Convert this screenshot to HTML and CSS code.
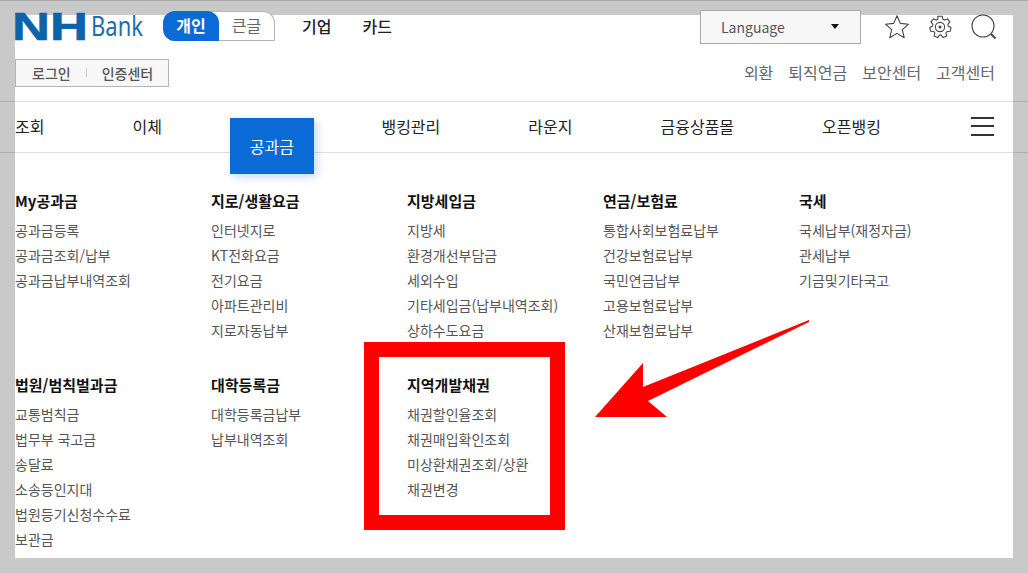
FILE: index.html
```html
<!DOCTYPE html>
<html lang="ko">
<head>
<meta charset="utf-8">
<title>NH Bank</title>
<link rel="stylesheet" href="styles.css">
</head>
<body>
<div class="sheet">
  <header class="top">
    <div class="top-left">
      <div class="brand-row">
        <svg class="logo" width="130" height="30" viewBox="0 0 130 30" role="img" aria-label="NH Bank">
          <text class="logo-nh" x="-3" y="28" textLength="76" lengthAdjust="spacingAndGlyphs">NH</text>
          <text class="logo-bank" x="76" y="24" textLength="52" lengthAdjust="spacingAndGlyphs">Bank</text>
        </svg>
        <div class="tabs">
          <a class="tab tab-on">개인</a>
          <a class="tab">큰글</a>
        </div>
        <nav class="biz">
          <a>기업</a>
          <a>카드</a>
        </nav>
      </div>
      <div class="login">
        <a>로그인</a>
        <i class="sep"></i>
        <a>인증센터</a>
      </div>
    </div>
    <div class="top-right">
      <div class="tools">
        <div class="lang"><span>Language</span><i class="caret"></i></div>
        <svg class="ico ico-star" width="26" height="26" viewBox="0 0 26 26"><path d="M13 1.8l3.3 7.6 8.2.8-6.2 5.4 1.9 8.1-7.2-4.3-7.2 4.3 1.9-8.1-6.2-5.4 8.2-.8z"/></svg>
        <svg class="ico" width="26" height="26" viewBox="0 0 26 26"><path d="M10.8 2.2h4.4l.7 3.1 1.6.8 2.9-1.2 2.4 3-1.9 2.5.4 1.7 2.7 1.5-.8 3.7-3.1.2-1.1 1.4.7 3.1-3.5 1.6-1.9-2.5h-1.8l-1.9 2.5-3.5-1.6.7-3.1-1.1-1.4-3.1-.2-.8-3.7 2.7-1.5.4-1.7-1.9-2.5 2.4-3 2.9 1.2 1.6-.8z"/><circle cx="13" cy="13" r="4.6"/><circle class="ico-fill" cx="13" cy="13" r="1.5"/></svg>
        <svg class="ico ico-search" width="26" height="26" viewBox="0 0 26 26"><circle cx="12" cy="12" r="11"/><path class="ico-handle" d="M20 20l4.5 4.5"/></svg>
      </div>
      <nav class="links">
        <a>외환</a>
        <a>퇴직연금</a>
        <a>보안센터</a>
        <a>고객센터</a>
      </nav>
    </div>
  </header>

  <nav class="gnb">
    <a>조회</a>
    <a>이체</a>
    <a class="gnb-on">공과금</a>
    <a>뱅킹관리</a>
    <a>라운지</a>
    <a>금융상품몰</a>
    <a>오픈뱅킹</a>
    <button class="burger" aria-label="menu"><i></i><i></i><i></i></button>
  </nav>

  <section class="menu">
    <div class="group">
      <h3>My공과금</h3>
      <ul><li>공과금등록</li><li>공과금조회/납부</li><li>공과금납부내역조회</li></ul>
    </div>
    <div class="group">
      <h3>지로/생활요금</h3>
      <ul><li>인터넷지로</li><li>KT전화요금</li><li>전기요금</li><li>아파트관리비</li><li>지로자동납부</li></ul>
    </div>
    <div class="group">
      <h3>지방세입금</h3>
      <ul><li>지방세</li><li>환경개선부담금</li><li>세외수입</li><li>기타세입금(납부내역조회)</li><li>상하수도요금</li></ul>
    </div>
    <div class="group">
      <h3>연금/보험료</h3>
      <ul><li>통합사회보험료납부</li><li>건강보험료납부</li><li>국민연금납부</li><li>고용보험료납부</li><li>산재보험료납부</li></ul>
    </div>
    <div class="group">
      <h3>국세</h3>
      <ul><li>국세납부(재정자금)</li><li>관세납부</li><li>기금및기타국고</li></ul>
    </div>
    <div class="group">
      <h3>법원/범칙벌과금</h3>
      <ul><li>교통범칙금</li><li>법무부 국고금</li><li>송달료</li><li>소송등인지대</li><li>법원등기신청수수료</li><li>보관금</li></ul>
    </div>
    <div class="group">
      <h3>대학등록금</h3>
      <ul><li>대학등록금납부</li><li>납부내역조회</li></ul>
    </div>
    <div class="group">
      <h3>지역개발채권</h3>
      <ul><li>채권할인율조회</li><li>채권매입확인조회</li><li>미상환채권조회/상환</li><li>채권변경</li></ul>
    </div>
  </section>
</div>

<div class="mark-box"></div>
<svg class="mark-arrow" width="230" height="110" viewBox="590 315 230 110"><polygon points="595,417 643,363 643,387 809,320 809,322 648,401 667,417"/></svg>
</body>
</html>
```
FILE: styles.css
```css
* { box-sizing: border-box; }
html, body { margin: 0; padding: 0; }
body {
  position: relative;
  width: 1028px;
  height: 573px;
  overflow: hidden;
  background: #c9c9c9;
  border-top: 1px solid #a8a8a8;
  font-family: "Noto Sans CJK KR", "Noto Sans", sans-serif;
  color: #222;
}
a { color: inherit; text-decoration: none; }
i { display: block; }

.sheet {
  width: 998px;
  height: 543px;
  margin: 14px 0 0 15px;
  background: #fff;
}

.top {
  height: 86px;
  display: flex;
  justify-content: space-between;
  align-items: flex-start;
}
.top-left { margin-top: -4px; }
.brand-row { display: flex; align-items: flex-start; }
.logo { display: block; margin-top: 1px; overflow: visible; }
.logo-nh { font-family: "Liberation Sans", sans-serif; font-weight: 700; font-size: 39px; fill: #0b63a9; stroke: #0b63a9; stroke-width: .6; }
.logo-bank { font-family: "Noto Sans", sans-serif; font-size: 27px; fill: #1c6da9; }

.tabs {
  display: flex;
  width: 112px;
  height: 30px;
  margin-left: 18px;
  border: 1px solid #b4b4b4;
  border-left: 0;
  border-radius: 12px 12px 0 12px;
  background: #fff;
}
.tab {
  flex: 1;
  margin: -1px 0;
  height: 30px;
  line-height: 28px;
  text-align: center;
  font-size: 16px;
  color: #666;
}
.tab-on {
  flex: 0 0 56px;
  background: #0a6ad6;
  color: #fff;
  font-weight: 700;
  border-radius: 12px 12px 0 12px;
}

.biz { display: flex; gap: 31px; margin-left: 27px; font-size: 16px; line-height: 30px; color: #222; font-weight: 500; }

.login {
  display: flex;
  align-items: center;
  width: 154px;
  height: 28px;
  margin-top: 17px;
  padding: 0 0 1px 16px;
  background: #f7f7f7;
  border: 1px solid #b4b4b4;
  font-size: 14px;
  line-height: 26px;
  color: #555;
  font-weight: 500;
}
.sep { width: 1px; height: 9px; margin: 0 15px; background: #ccc; }

.top-right { display: flex; flex-direction: column; align-items: flex-end; margin-top: -5px; padding-right: 18px; }
.tools { display: flex; align-items: center; margin-right: -2px; }
.lang {
  display: flex;
  align-items: center;
  width: 161px;
  height: 34px;
  margin-right: 23px;
  padding: 0 0 1px 20px;
  background: #f7f7f7;
  border: 1px solid #aaa;
  font-size: 14px;
  color: #555;
}
.lang span { flex: 0 0 110px; }
.caret { width: 0; height: 0; border: 4px solid transparent; border-top: 5px solid #111; border-bottom: 0; }
.ico { display: block; margin-right: 18px; overflow: visible; }
.ico-star { margin-right: 17px; }
.ico:last-child { margin-right: 0; }
.ico path, .ico circle { fill: none; stroke: #444; stroke-width: 1.1; stroke-linejoin: round; }
.ico .ico-fill { fill: #444; stroke: none; }
.ico .ico-handle { stroke-width: 2; }

.links { display: flex; gap: 15px; margin-top: 16px; font-size: 16px; line-height: 24px; color: #666; }

.gnb {
  display: flex;
  align-items: center;
  gap: 88px;
  height: 52px;
  width: 1028px;
  margin: 0 0 0 -15px;
  padding: 0 0 2px 15px;
  border-top: 1px solid rgba(0, 0, 0, .13);
  border-bottom: 1px solid rgba(0, 0, 0, .13);
  font-size: 16px;
  color: #222;
}
.gnb-on {
  align-self: flex-start;
  width: 84px;
  height: 56px;
  margin: 16px -20.5px 0 -20px;
  line-height: 56px;
  text-align: center;
  background: #0a6ad6;
  color: #fff;
  box-shadow: 3px 3px 8px rgba(10, 106, 214, .25);
}
.burger {
  display: flex;
  flex-direction: column;
  gap: 6.5px;
  width: 23px;
  margin: 0 0 0 2.5px;
  padding: 0;
  border: 0;
  background: none;
}
.burger i { width: 23px; height: 2px; background: #333; }

.menu {
  display: grid;
  grid-template-columns: repeat(5, 196px);
  row-gap: 31px;
  align-items: start;
  padding-top: 37px;
}
.group h3 { margin: 0 0 6px; font-size: 15px; line-height: 22px; font-weight: 700; color: #111; }
.group ul { margin: 0; padding: 0; list-style: none; font-size: 14px; line-height: 25px; color: #555; }

.mark-box {
  position: absolute;
  left: 364px;
  top: 341px;
  width: 201px;
  height: 188px;
  border: 15px solid #f00;
}
.mark-arrow { position: absolute; left: 590px; top: 314px; }
.mark-arrow polygon { fill: #f00; }
```
